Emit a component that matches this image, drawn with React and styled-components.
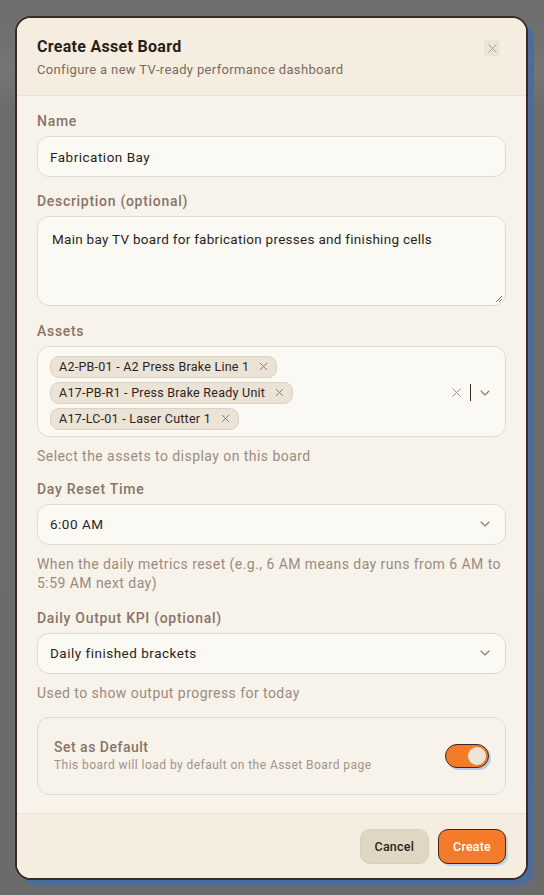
import React from "react";
import styled, { createGlobalStyle } from "styled-components";
import { X, ChevronDown } from "lucide-react";

const Global = createGlobalStyle`
  html, body { margin: 0; padding: 0; }
  body { font-family: Roboto, "Liberation Sans", sans-serif; background: #6b6b6b; }
  * { box-sizing: border-box; }
`;

const Backdrop = styled.div`
  min-height: 100vh;
  background: linear-gradient(180deg, #6e6e6e 0px, #707070 40px, #757575 70px, #6c6c6c 110px, #6b6b6b 100%);
  padding: 16px 0 0 15px;
`;

const Modal = styled.div`
  width: 513px;
  height: 864px;
  background: #f7f3ea;
  border: 2px solid #3b2822;
  border-radius: 16px;
  box-shadow: 6px 6px 0 #4d6b9b;
  display: flex;
  flex-direction: column;
  overflow: hidden;
`;

const Header = styled.div`
  position: relative;
  background: #f5eee0;
  border-bottom: 1px solid #ebe3d4;
  padding: 18px 20px 16px 20px;
`;

const Title = styled.h2`
  margin: 0;
  font-size: 16px;
  font-weight: 700;
  letter-spacing: 0.3px;
  color: #2a1e18;
  line-height: 22px;
`;

const Subtitle = styled.p`
  margin: 3px 0 0;
  font-size: 13px;
  letter-spacing: 0.35px;
  color: #7a6a60;
  line-height: 18px;
`;

const Close = styled.button`
  position: absolute;
  top: 22px;
  right: 26px;
  width: 16px;
  height: 16px;
  padding: 0;
  border: none;
  background: #ece4d6;
  color: #a09488;
  display: flex;
  align-items: center;
  justify-content: center;
`;

const Body = styled.div`
  flex: 1;
  padding: 15px 20px 18px;
  display: flex;
  flex-direction: column;
`;

const Field = styled.div`
  display: flex;
  flex-direction: column;
  margin-bottom: ${(p) => p.$mb ?? 14}px;
`;

const Label = styled.label`
  font-size: 14px;
  font-weight: 500;
  letter-spacing: 0.7px;
  color: #8a7468;
  line-height: 20px;
  margin-bottom: 5px;
`;

const Input = styled.div`
  height: 41px;
  background: #fbf9f4;
  border: 1px solid #e2dacb;
  border-radius: 12px;
  padding: 0 12px;
  display: flex;
  align-items: center;
  justify-content: space-between;
  font-size: 13.5px;
  letter-spacing: 0.5px;
  color: #2a1e18;
`;

const TextArea = styled.div`
  position: relative;
  height: 90px;
  background: #fbf9f4;
  border: 1px solid #e2dacb;
  border-radius: 12px;
  padding: 13px 14px;
  font-size: 13.5px;
  letter-spacing: 0.28px;
  color: #2a1e18;
  line-height: 18px;
`;

const Resize = styled.svg`
  position: absolute;
  right: 2px;
  bottom: 2px;
`;

const MultiBox = styled.div`
  background: #fbf9f4;
  border: 1px solid #e2dacb;
  border-radius: 12px;
  padding: 8px 12px 6px 12px;
  display: flex;
  align-items: center;
  min-height: 91px;
`;

const Chips = styled.div`
  flex: 1;
  display: flex;
  flex-wrap: wrap;
  gap: 4px;
  padding-right: 50px;
`;

const Chip = styled.span`
  height: 22px;
  display: inline-flex;
  align-items: center;
  gap: 8px;
  padding: 0 6px 0 8px;
  background: #ebe3d5;
  border: 1px solid #dcd2c1;
  border-radius: 9px;
  font-size: 12.5px;
  font-weight: 400;
  letter-spacing: 0.25px;
  color: #2e221c;
`;

const Indicators = styled.div`
  display: flex;
  align-items: center;
  gap: 6px;
  color: #9a8a80;
`;

const Sep = styled.span`
  width: 1px;
  height: 17px;
  background: #3a2620;
`;

const Help = styled.div`
  font-size: 14px;
  letter-spacing: 0.45px;
  color: #9c8a80;
  line-height: 19.5px;
  margin-top: ${(p) => p.$mt ?? 10}px;
`;

const Card = styled.div`
  margin-top: 0;
  border: 1px solid #e2dacb;
  border-radius: 12px;
  padding: 20px 16px 21px 16px;
  display: flex;
  align-items: center;
  justify-content: space-between;
`;

const CardTitle = styled.div`
  font-size: 14px;
  font-weight: 500;
  letter-spacing: 0.5px;
  color: #8a7468;
  line-height: 18px;
`;

const CardSub = styled.div`
  font-size: 12px;
  letter-spacing: 0.45px;
  color: #a2928a;
  line-height: 16px;
  margin-top: 1px;
`;

const Toggle = styled.span`
  width: 44px;
  height: 24px;
  border-radius: 12px;
  background: #f47b2a;
  border: 1.5px solid #3b2822;
  box-shadow: 2px 2px 0 #b9cbe6;
  display: flex;
  align-items: center;
  justify-content: flex-end;
  padding: 0 2px;
`;

const Knob = styled.span`
  width: 18px;
  height: 18px;
  border-radius: 50%;
  background: #ece5d7;
`;

const Footer = styled.div`
  background: #f5eee0;
  border-top: 1px solid #ebe3d4;
  padding: 15px 20px 14px;
  display: flex;
  justify-content: flex-end;
  gap: 9px;
`;

const Button = styled.button`
  height: 35px;
  padding: 0 14px;
  border-radius: 10px;
  font-family: inherit;
  font-size: 12.5px;
  font-weight: 500;
  letter-spacing: 0.2px;
  background: ${(p) => (p.$primary ? "#f47b2a" : "#dfd6c4")};
  color: ${(p) => (p.$primary ? "#ffffff" : "#2a1e18")};
  border: ${(p) => (p.$primary ? "1.5px solid #3b2822" : "1px solid #d8cfbd")};
  box-shadow: ${(p) => (p.$primary ? "2px 2px 0 #c2d2ea" : "none")};
`;

const chips = [
  "A2-PB-01 - A2 Press Brake Line 1",
  "A17-PB-R1 - Press Brake Ready Unit",
  "A17-LC-01 - Laser Cutter 1",
];

export default function App() {
  return (
    <>
      <Global />
      <Backdrop>
        <Modal>
          <Header>
            <Title>Create Asset Board</Title>
            <Subtitle>Configure a new TV-ready performance dashboard</Subtitle>
            <Close aria-label="Close">
              <X size={15} strokeWidth={1.5} />
            </Close>
          </Header>
          <Body>
            <Field>
              <Label>Name</Label>
              <Input>Fabrication Bay</Input>
            </Field>
            <Field $mb={15}>
              <Label>Description (optional)</Label>
              <TextArea>
                Main bay TV board for fabrication presses and finishing cells
                <Resize width="8" height="8" viewBox="0 0 8 8">
                  <path d="M7 1 L1 7 M7 4 L4 7" stroke="#7a6a60" strokeWidth="1" />
                </Resize>
              </TextArea>
            </Field>
            <Field $mb={12}>
              <Label>Assets</Label>
              <MultiBox>
                <Chips>
                  {chips.map((c) => (
                    <Chip key={c}>
                      {c}
                      <X size={13} strokeWidth={1.8} color="#8a7a70" />
                    </Chip>
                  ))}
                </Chips>
                <Indicators>
                  <X size={15} strokeWidth={1.6} color="#a0948a" />
                  <Sep />
                  <ChevronDown size={16} strokeWidth={1.6} color="#8a7a70" />
                </Indicators>
              </MultiBox>
              <Help $mt={10}>Select the assets to display on this board</Help>
            </Field>
            <Field>
              <Label>Day Reset Time</Label>
              <Input>
                6:00 AM
                <ChevronDown size={16} strokeWidth={1.6} color="#8a7a70" />
              </Input>
              <Help>
                When the daily metrics reset (e.g., 6 AM means day runs from 6 AM to 5:59 AM next day)
              </Help>
            </Field>
            <Field $mb={14}>
              <Label>Daily Output KPI (optional)</Label>
              <Input>
                Daily finished brackets
                <ChevronDown size={16} strokeWidth={1.6} color="#8a7a70" />
              </Input>
              <Help>Used to show output progress for today</Help>
            </Field>
            <Card>
              <div>
                <CardTitle>Set as Default</CardTitle>
                <CardSub>This board will load by default on the Asset Board page</CardSub>
              </div>
              <Toggle>
                <Knob />
              </Toggle>
            </Card>
          </Body>
          <Footer>
            <Button>Cancel</Button>
            <Button $primary>Create</Button>
          </Footer>
        </Modal>
      </Backdrop>
    </>
  );
}
